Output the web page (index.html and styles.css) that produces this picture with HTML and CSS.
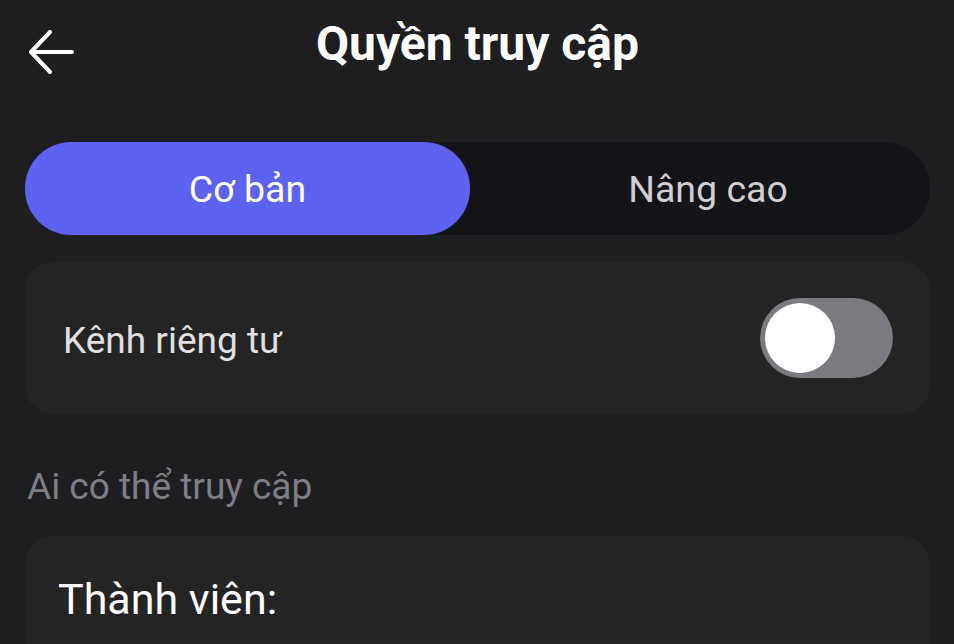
FILE: index.html
```html
<!DOCTYPE html>
<html lang="vi">
<head>
<meta charset="utf-8">
<title>Quyền truy cập</title>
<link rel="stylesheet" href="styles.css">
</head>
<body>
<div class="screen">
  <header class="topbar">
    <button class="back" aria-label="Quay lại">
      <svg width="46" height="44" viewBox="0 0 46 44" fill="none" stroke="#fff" stroke-width="4" stroke-linecap="round" stroke-linejoin="round">
        <path d="M44 22H3M22 2L3 22l19 20"/>
      </svg>
    </button>
    <h1 class="title">Quyền truy cập</h1>
    <span class="spacer"></span>
  </header>

  <div class="segment">
    <div class="seg-item active">Cơ bản</div>
    <div class="seg-item other">Nâng cao</div>
  </div>

  <div class="card row">
    <span class="row-label">Kênh riêng tư</span>
    <div class="switch"><span class="thumb"></span></div>
  </div>

  <div class="section-label">Ai có thể truy cập</div>

  <div class="card members">
    <div class="members-title">Thành viên:</div>
  </div>
</div>
</body>
</html>
```

FILE: styles.css
```css
html, body {
  margin: 0;
  padding: 0;
  background: #1e1e21;
  height: 100%;
  overflow: hidden;
}
.screen {
  font-family: Roboto, "Noto Sans", sans-serif;
  padding: 0 24px 0 25px;
  display: flex;
  flex-direction: column;
  color: #fff;
}
.topbar {
  height: 92px;
  display: grid;
  grid-template-columns: 1fr auto 1fr;
  align-items: center;
}
.back {
  background: none;
  border: 0;
  padding: 12px 0 0 3px;
  margin: 0;
  width: 60px;
  display: flex;
  align-items: center;
  cursor: pointer;
}
.back svg { display: block; }
.title {
  margin: 0;
  font-size: 48px;
  font-weight: 700;
  color: #fff;
  line-height: 1;
  padding-bottom: 4px;
}
.segment {
  margin-top: 50px;
  height: 93px;
  border-radius: 46px;
  background: #141418;
  display: flex;
}
.seg-item {
  flex: 1;
  display: flex;
  align-items: center;
  justify-content: center;
  font-size: 37.5px;
  color: #d0d0d4;
  border-radius: 46px;
}
.seg-item.other {
  padding-left: 16px;
}
.seg-item.active {
  background: #5d63f0;
  color: #fff;
  flex: 0 0 445px;
}
.card {
  background: #242424;
  border-radius: 28px;
}
.row {
  margin-top: 27px;
  height: 152px;
  display: flex;
  align-items: center;
  justify-content: space-between;
  padding: 4px 37px 0 38px;
  box-sizing: border-box;
}
.row-label {
  font-size: 37px;
  color: #e0e0e0;
}
.switch {
  width: 133px;
  height: 80px;
  border-radius: 40px;
  background: #7a7a80;
  display: flex;
  align-items: center;
  padding: 0 5px;
  box-sizing: border-box;
  margin-top: -4px;
}
.thumb {
  width: 70px;
  height: 70px;
  border-radius: 50%;
  background: #fff;
}
.section-label {
  margin-top: 51px;
  padding-left: 2px;
  font-size: 37px;
  color: #7e7e84;
}
.members {
  margin-top: 28px;
  height: 160px;
  padding: 38px 33px 0;
  box-sizing: border-box;
}
.members-title {
  font-size: 43px;
  color: #fff;
}
```
